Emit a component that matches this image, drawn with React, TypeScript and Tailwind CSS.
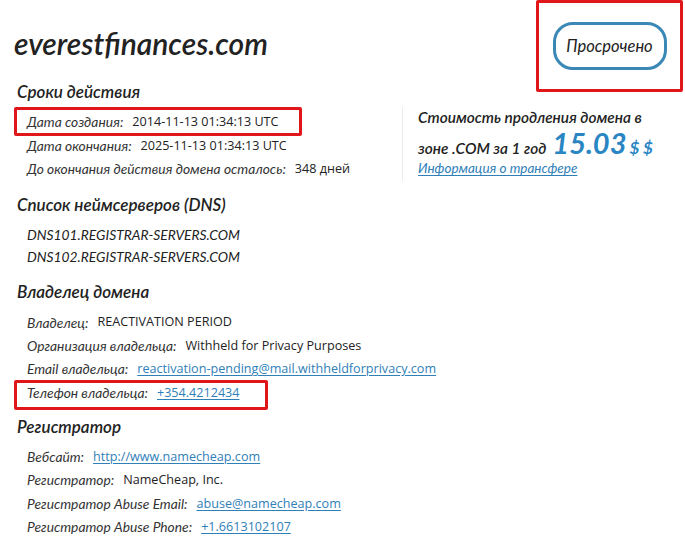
import type { ReactNode } from "react";

type Row = { label: string; value: string; href?: boolean; mark?: "create" | "phone" };

const times: Row[] = [
  { label: "Дата создания:", value: "2014-11-13 01:34:13 UTC", mark: "create" },
  { label: "Дата окончания:", value: "2025-11-13 01:34:13 UTC" },
  { label: "До окончания действия домена осталось:", value: "348 дней" },
];

const owner: Row[] = [
  { label: "Владелец:", value: "REACTIVATION PERIOD" },
  { label: "Организация владельца:", value: "Withheld for Privacy Purposes" },
  { label: "Email владельца:", value: "reactivation-pending@mail.withheldforprivacy.com", href: true },
  { label: "Телефон владельца:", value: "+354.4212434", href: true, mark: "phone" },
];

const registrar: Row[] = [
  { label: "Вебсайт:", value: "http://www.namecheap.com", href: true },
  { label: "Регистратор:", value: "NameCheap, Inc." },
  { label: "Регистратор Abuse Email:", value: "abuse@namecheap.com", href: true },
  { label: "Регистратор Abuse Phone:", value: "+1.6613102107", href: true },
];

const italic = "font-['Lato','Liberation_Sans',sans-serif] italic";
const plain = "font-['Open_Sans','Liberation_Sans',sans-serif]";

function InfoRow({ row }: { row: Row }) {
  return (
    <div className="relative flex h-[23.4px] items-center gap-[9px] pl-[13px] text-[13.8px] text-[#222]">
      {row.mark === "create" && (
        <span className="pointer-events-none absolute left-0 top-[-4px] h-[29px] w-[288px] rounded-[2px] border-[3px] border-[#e0161b]" />
      )}
      {row.mark === "phone" && (
        <span className="pointer-events-none absolute left-0 top-[-1px] h-[30px] w-[254px] rounded-[2px] border-[3px] border-[#e0161b]" />
      )}
      <span className={`${italic} text-[#333]`}>{row.label}</span>
      {row.href ? (
        <a className={`${plain} text-[12.6px] text-[#2f80b8] underline underline-offset-2`}>{row.value}</a>
      ) : (
        <span className={`${plain} text-[12.6px]`}>{row.value}</span>
      )}
    </div>
  );
}

function Section({ title, children, className = "" }: { title: string; children: ReactNode; className?: string }) {
  return (
    <section className={className}>
      <h2 className={`${italic} mb-[7px] pl-[3px] text-[17px] font-semibold leading-[24px] text-[#222]`}>{title}</h2>
      {children}
    </section>
  );
}

export default function App() {
  return (
    <div className="min-h-[557px] w-[685px] bg-white pl-[14px] pr-[2px]">
      <header className="flex items-start justify-between">
        <h1 className={`${italic} mt-[25px] text-[30px] font-semibold leading-[36px] text-[#222]`}>
          everestfinances.com
        </h1>
        <div className="flex h-[92px] w-[147px] items-center justify-center rounded-[2px] border-[3px] border-[#e0161b]">
          <span className={`${italic} flex h-[48px] w-[114px] items-center justify-center rounded-[20px] border-[3px] border-[#3b88b6] text-[16.5px] text-[#222]`}>
            Просрочено
          </span>
        </div>
      </header>

      <div className="mt-[-12px]">
        <Section title="Сроки действия">
          <div className="flex">
            <div className="w-[388px]">
              {times.map((row) => (
                <InfoRow key={row.label} row={row} />
              ))}
            </div>
            <div className="mt-[-4px] h-[74px] border-l border-[#ececec] pl-[15px]">
              <p className={`${italic} text-[15.4px] font-semibold leading-[20px] text-[#222]`}>
                Стоимость продления домена в
              </p>
              <p className={`${italic} flex items-baseline text-[15.4px] font-semibold leading-[32px] text-[#222]`}>
                зоне .COM за 1 год
                <span className="ml-[6px] text-[29px] font-bold text-[#2a86c3]">15.03</span>
                <span className="ml-[3px] text-[17px] font-bold text-[#2a86c3]">$ $</span>
              </p>
              <a className={`${italic} mt-[-6px] block text-[13.5px] leading-[20px] text-[#2f80b8] underline underline-offset-2`}>
                Информация о трансфере
              </a>
            </div>
          </div>
        </Section>

        <Section title="Список неймсерверов (DNS)" className="mt-[12px]">
          <div className={`${italic} pl-[13px] text-[13.8px] leading-[22px] text-[#222]`}>
            <p>DNS101.REGISTRAR-SERVERS.COM</p>
            <p>DNS102.REGISTRAR-SERVERS.COM</p>
          </div>
        </Section>

        <Section title="Владелец домена" className="mt-[12px]">
          {owner.map((row) => (
            <InfoRow key={row.label} row={row} />
          ))}
        </Section>

        <Section title="Регистратор" className="mt-[10px]">
          {registrar.map((row) => (
            <InfoRow key={row.label} row={row} />
          ))}
        </Section>
      </div>
    </div>
  );
}
